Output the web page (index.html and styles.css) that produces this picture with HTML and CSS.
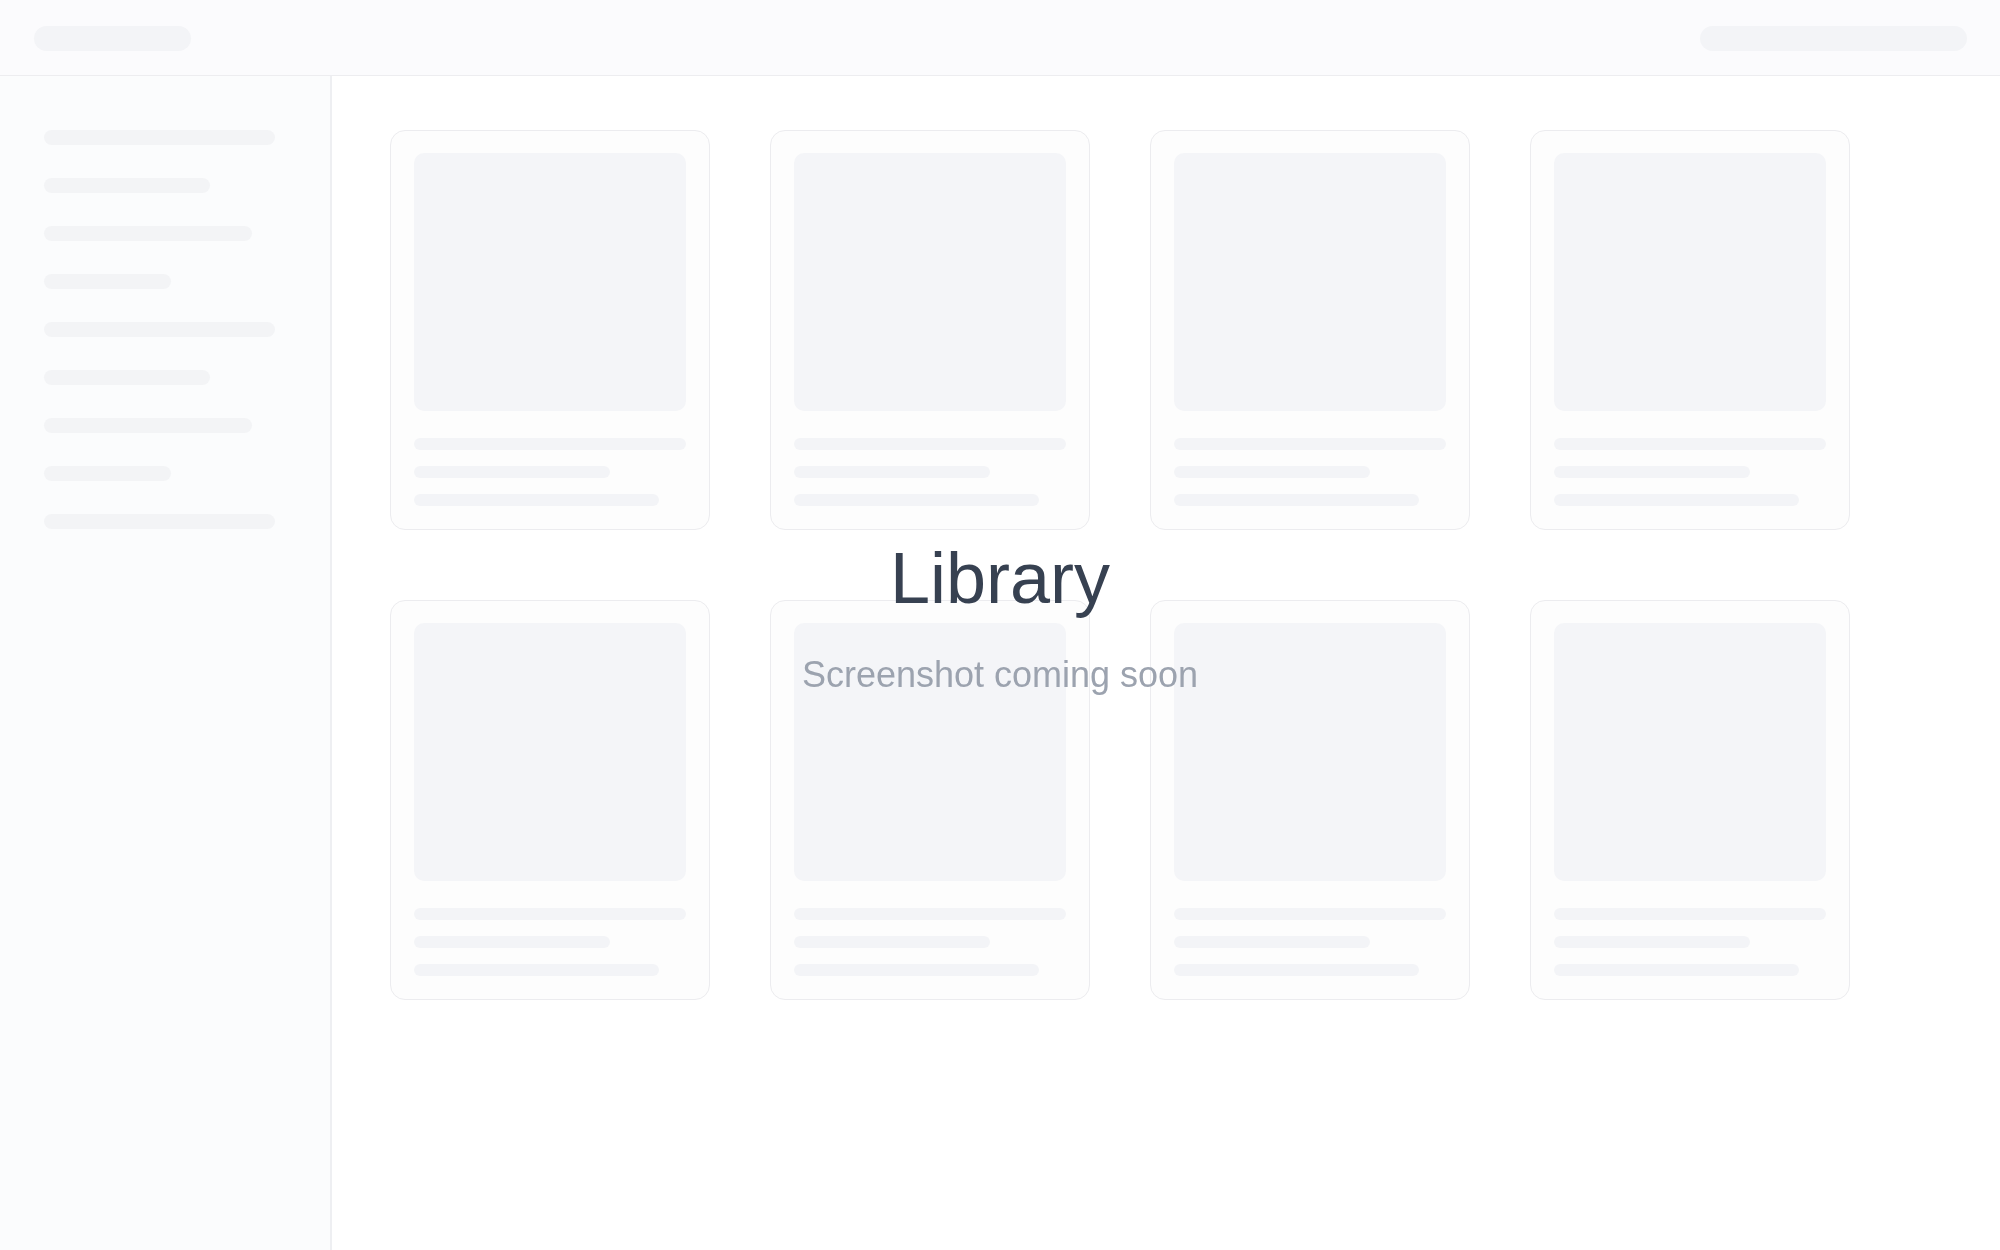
FILE: index.html
```html
<!DOCTYPE html>
<html lang="en">
<head>
<meta charset="utf-8">
<title>Library</title>
<link rel="stylesheet" href="styles.css">
</head>
<body>
<div class="app">
  <header class="topbar">
    <div class="pill pill-left"></div>
    <div class="pill pill-right"></div>
  </header>
  <div class="body">
    <aside class="sidebar">
      <div class="nav-line w100"></div>
      <div class="nav-line w72"></div>
      <div class="nav-line w90"></div>
      <div class="nav-line w55"></div>
      <div class="nav-line w100"></div>
      <div class="nav-line w72"></div>
      <div class="nav-line w90"></div>
      <div class="nav-line w55"></div>
      <div class="nav-line w100"></div>
    </aside>
    <main class="main">
      <div class="grid">
        <div class="card"><div class="thumb"></div><div class="line l1"></div><div class="line l2"></div><div class="line l3"></div></div>
        <div class="card"><div class="thumb"></div><div class="line l1"></div><div class="line l2"></div><div class="line l3"></div></div>
        <div class="card"><div class="thumb"></div><div class="line l1"></div><div class="line l2"></div><div class="line l3"></div></div>
        <div class="card"><div class="thumb"></div><div class="line l1"></div><div class="line l2"></div><div class="line l3"></div></div>
        <div class="card"><div class="thumb"></div><div class="line l1"></div><div class="line l2"></div><div class="line l3"></div></div>
        <div class="card"><div class="thumb"></div><div class="line l1"></div><div class="line l2"></div><div class="line l3"></div></div>
        <div class="card"><div class="thumb"></div><div class="line l1"></div><div class="line l2"></div><div class="line l3"></div></div>
        <div class="card"><div class="thumb"></div><div class="line l1"></div><div class="line l2"></div><div class="line l3"></div></div>
      </div>
    </main>
  </div>
</div>
<div class="overlay">
  <div class="message">
    <h1 class="title">Library</h1>
    <p class="subtitle">Screenshot coming soon</p>
  </div>
</div>
</body>
</html>
```

FILE: styles.css
```css
* { box-sizing: border-box; }
html, body {
  margin: 0;
  padding: 0;
  width: 2000px;
  height: 1250px;
  overflow: hidden;
  background: #ffffff;
  font-family: "Liberation Sans", Arial, sans-serif;
}
.app {
  display: flex;
  flex-direction: column;
  height: 1250px;
}
.topbar {
  height: 76px;
  flex: none;
  display: flex;
  align-items: center;
  justify-content: space-between;
  padding: 1px 33px 0 34px;
  background: #fbfbfd;
  border-bottom: 1px solid #ededf0;
}
.pill {
  height: 25px;
  border-radius: 13px;
  background: #f3f4f7;
}
.pill-left { width: 157px; }
.pill-right { width: 267px; }
.body {
  flex: 1;
  display: flex;
  min-height: 0;
}
.sidebar {
  width: 332px;
  flex: none;
  background: #fbfcfd;
  border-right: 2px solid #eeeff2;
  padding: 54px 0 0 44px;
  display: flex;
  flex-direction: column;
  gap: 33px;
}
.nav-line {
  height: 15px;
  border-radius: 8px;
  background: #f3f4f6;
}
.w100 { width: 231px; }
.w72 { width: 166px; }
.w90 { width: 208px; }
.w55 { width: 127px; }
.main {
  flex: 1;
  padding: 54px 0 0 58px;
}
.grid {
  display: grid;
  grid-template-columns: repeat(4, 320px);
  column-gap: 60px;
  row-gap: 70px;
}
.card {
  height: 400px;
  border: 1px solid #ececef;
  border-radius: 15px;
  background: #fdfdfd;
  padding: 22px 23px;
  display: flex;
  flex-direction: column;
}
.thumb {
  height: 258px;
  border-radius: 10px;
  background: #f4f5f8;
  margin-bottom: 27px;
}
.line {
  height: 12px;
  border-radius: 6px;
  background: #f3f4f7;
}
.line + .line { margin-top: 16px; }
.l1 { width: 100%; }
.l2 { width: 72%; }
.l3 { width: 90%; }
.overlay {
  position: fixed;
  inset: 0;
  display: flex;
  align-items: center;
  justify-content: center;
  pointer-events: none;
}
.message {
  display: flex;
  flex-direction: column;
  align-items: center;
  margin-bottom: 15px;
}
.title {
  margin: 0;
  font-size: 72px;
  line-height: 72px;
  font-weight: 400;
  color: #374151;
}
.subtitle {
  margin: 43px 0 0;
  font-size: 36px;
  line-height: 36px;
  color: #9ca3af;
}
```
